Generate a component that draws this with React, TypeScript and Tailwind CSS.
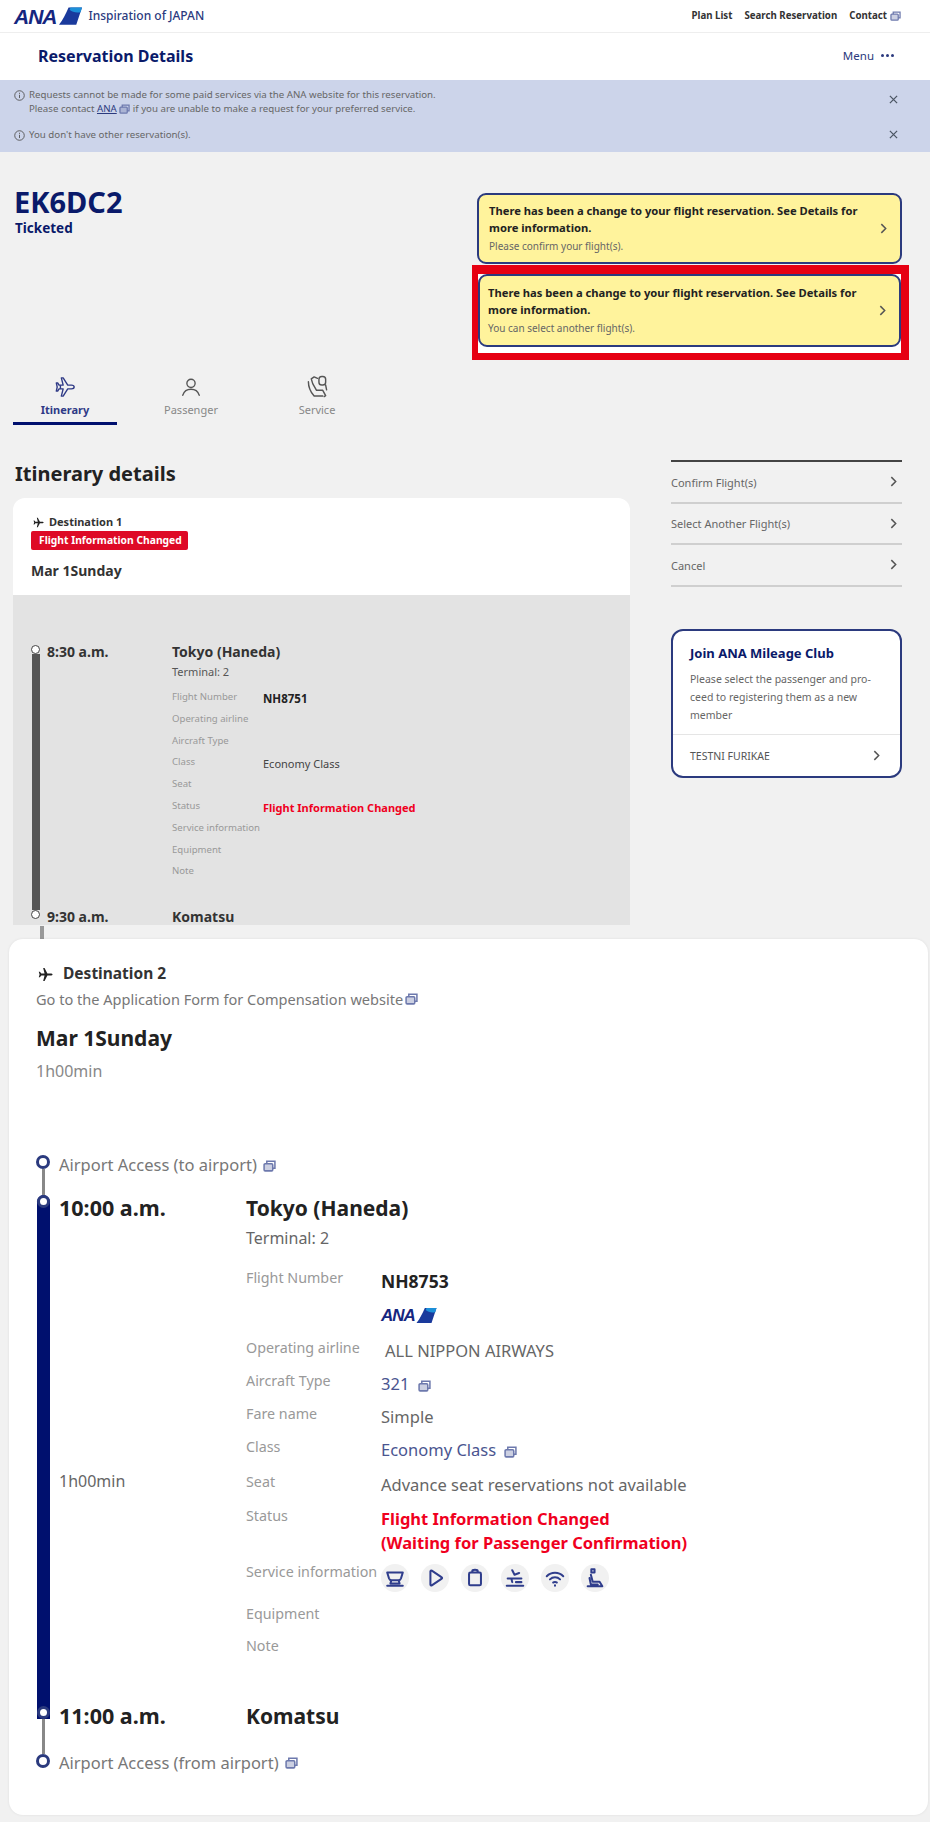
import React from 'react';

const NAVY = 'text-[#0a1a6a]';

function ExtIcon({ className = 'w-[11px] h-[10px] text-[#6d79ad]' }: { className?: string }) {
    return (
        <svg viewBox="0 0 12 11" className={`inline-block ${className}`} fill="none" stroke="currentColor" strokeWidth="1.4">
            <rect x="1" y="3.5" width="8" height="6.5" rx="1" fill="currentColor" fillOpacity="0.35" />
            <path d="M3.5 3.5V1.2h7.5v6.3H9" />
        </svg>
    );
}

function Chevron({ className = 'text-[#555]' }: { className?: string }) {
    return (
        <svg viewBox="0 0 8 12" className={`w-[7px] h-[11px] ${className}`} fill="none" stroke="currentColor" strokeWidth="1.7">
            <path d="M1.5 1l5 5-5 5" />
        </svg>
    );
}

function CloseX({ className = '' }: { className?: string }) {
    return (
        <svg viewBox="0 0 10 10" className={`w-[9px] h-[9px] text-[#4b5563] ${className}`} fill="none" stroke="currentColor" strokeWidth="1.4">
            <path d="M1 1l8 8M9 1L1 9" />
        </svg>
    );
}

function InfoIcon() {
    return (
        <svg viewBox="0 0 12 12" className="w-[11px] h-[11px] text-[#555] shrink-0" fill="none" stroke="currentColor" strokeWidth="1">
            <circle cx="6" cy="6" r="5.2" />
            <path d="M6 5.2v3.6M6 3v1.2" />
        </svg>
    );
}

function AnaLogo({ size }: { size: 'lg' | 'sm' }) {
    const big = size === 'lg';
    return (
        <span className="inline-flex items-center" aria-label="ANA">
            <span
                className={`font-['Liberation_Sans',sans-serif] font-bold italic text-[#15267f] tracking-[-1px] leading-none ${big ? 'text-[21px]' : 'text-[17px]'}`}
            >
                ANA
            </span>
            <svg viewBox="0 0 24 18" className={big ? 'w-[23px] h-[18px] ml-[2px]' : 'w-[21px] h-[15px] ml-[1px]'}>
                <path d="M10 0H24L18 18H0C4 13 7 7 10 0Z" fill="#1a3a9c" />
                <path d="M12 0H24L22.500 5C18 6 14 5 11 2.500Z" fill="#1c8fd8" />
            </svg>
        </span>
    );
}

function TopPlane() {
    return (
        <svg viewBox="0 0 16 16" className="w-[15px] h-[15px] text-[#222] shrink-0" fill="currentColor">
            <path d="M15.5 8c0-.7-1-1-2-1H10L7 1H5.5l1.5 6H3.5L2 5H.8l.9 3-.9 3H2l1.5-2H7l-1.5 6H7l3-6h3.5c1 0 2-.3 2-1z" />
        </svg>
    );
}

function TabPlane() {
    return (
        <svg viewBox="0 0 24 24" className="w-[22px] h-[22px] text-[#2f3a86]" fill="none" stroke="currentColor" strokeWidth="1.5" strokeLinejoin="round">
            <path d="M22 12c0-1-1.500-2-3-2h-4L10 2H8l2 8H5.500L4 7.500H2.500L3.500 12l-1 4.500H4L5.500 14H10l-2 8h2l5-8h4c1.500 0 3-1 3-2z" />
            <path d="M7 10v4" />
        </svg>
    );
}

function TabPerson() {
    return (
        <svg viewBox="0 0 24 24" className="w-[22px] h-[22px] text-[#555]" fill="none" stroke="currentColor" strokeWidth="1.5" strokeLinecap="round">
            <circle cx="12" cy="8" r="4.500" />
            <path d="M3 21c1.500-4.500 5-6.500 9-6.500s7.500 2 9 6.500" />
        </svg>
    );
}

function TabSeat() {
    return (
        <svg viewBox="0 0 24 24" className="w-[23px] h-[23px] text-[#555]" fill="none" stroke="currentColor" strokeWidth="1.500" strokeLinecap="round" strokeLinejoin="round">
            <rect x="13.500" y="1.500" width="7" height="9" rx="3" />
            <path d="M12 3.500L8.500 2 5.500 4l1.500 5 4 7h6.500l3 5.500-1.500 1" />
            <path d="M2.500 7c0 6 2.500 11 6 15h9" />
            <path d="M20.500 10.500l1 5" />
        </svg>
    );
}

const serviceIcons = [
    <path key="cup" d="M3.500 6h17l-2 6.500c-.5 1.500-1.500 2-3 2H8.500c-1.500 0-2.500-.5-3-2L3.500 6zM8 14.500L7 18h10l-1-3.500M3.500 20.500h17" />,
    <path key="play" d="M7 5c0-1 .8-1.400 1.500-1L19 11c1 .6 1 1.400 0 2L8.500 20c-.7.4-1.500 0-1.500-1V5z" />,
    <path key="bag" d="M9 6V4.500C9 3.500 10 3 12 3s3 .5 3 1.500V6M7 6h10c1 0 1.500.5 1.500 1.500v11c0 1-.5 1.500-1.500 1.500H7c-1 0-1.500-.5-1.500-1.500v-11C5.500 6.500 6 6 7 6z" />,
    <path key="seat" d="M9 3.500l2.500 5 5-2M4 12.500h15M8 12.500l1 4M3 20.500h18M13 16.500h6" />,
    <path key="wifi" d="M3 10c5-5 13-5 18 0M6.500 13.500c3-3 8-3 11 0M10 17c1-1 3-1 4 0M12 20v.5" />,
    <path key="person" d="M8 2.500h3.500V6H8zM7.500 8.500l2 7.500h7.500l3 5M6 12l1.500 7h7.500M4 21h16" />,
];

function Dot({ border }: { border: string }) {
    return <span className={`block rounded-full bg-white shrink-0 ${border}`} />;
}

type Row = { label: string; value?: React.ReactNode };

const firstRows: Row[] = [
    { label: 'Flight Number', value: <span className="font-bold text-[11.500px] text-[#222]">NH8751</span> },
    { label: 'Operating airline' },
    { label: 'Aircraft Type' },
    { label: 'Class', value: <span className="text-[#444]">Economy Class</span> },
    { label: 'Seat' },
    { label: 'Status', value: <span className="font-bold text-[#f0001e]">Flight Information Changed</span> },
    { label: 'Service information' },
    { label: 'Equipment' },
    { label: 'Note' },
];

function Notice({ sub, tall }: { sub: string; tall?: boolean }) {
    return (
        <div className={`flex items-center justify-between bg-[#fff39c] border-2 border-[#2b3a7e] rounded-[9px] pr-[13px] ${tall ? 'h-[73px] pl-[8px]' : 'h-[71px] pl-[10px]'}`}>
            <div className="w-[385px]">
                <p className="text-[11.200px] leading-[17px] font-bold text-[#222]">
                    There has been a change to your flight reservation. See Details for more information.
                </p>
                <p className="text-[10px] leading-[17px] mt-[2px] text-[#666]">{sub}</p>
            </div>
            <Chevron />
        </div>
    );
}

function Tab({ icon, label, active }: { icon: React.ReactNode; label: string; active?: boolean }) {
    return (
        <div className={`w-[104px] mr-[22px] flex flex-col items-center h-[54px] pt-[3px] ${active ? 'border-b-[3px] border-[#00106e]' : ''}`}>
            <div className="h-[25px] flex items-center">{icon}</div>
            <span className={`mt-[3px] text-[11px] leading-[15px] ${active ? 'font-bold text-[#2f3a86]' : 'text-[#888]'}`}>{label}</span>
        </div>
    );
}

function SideLink({ label }: { label: string }) {
    return (
        <div className="flex items-center justify-between h-[41.500px] border-b-2 border-[#cfcfcf] pr-[5px] text-[11px] text-[#666]">
            <span className="pt-[2px]">{label}</span>
            <Chevron />
        </div>
    );
}

function BigRow({ label, children, h }: { label: string; children?: React.ReactNode; h: string }) {
    return (
        <div className={`flex ${h}`}>
            <span className="w-[135px] text-[14.300px] leading-[20px] text-[#999] shrink-0 whitespace-nowrap">{label}</span>
            <div className="text-[16.500px] leading-[24px] pt-[1px]">{children}</div>
        </div>
    );
}

export default function App() {
    return (
        <div className="w-[930px] h-[1822px] overflow-hidden bg-[#f1f1f1] font-['Noto_Sans',sans-serif]">
            {/* global header */}
            <header className="h-[33px] bg-white border-b border-[#eee] flex items-center justify-between pl-[14px] pr-[29px]">
                <div className="flex items-center">
                    <AnaLogo size="lg" />
                    <span className="ml-[7px] text-[12px] text-[#2b3a7e] font-medium">Inspiration of JAPAN</span>
                </div>
                <nav className="flex items-center gap-[12px] text-[9.700px] font-bold text-[#333]">
                    <span>Plan List</span>
                    <span>Search Reservation</span>
                    <span className="flex items-center gap-[3px]">Contact <ExtIcon /></span>
                </nav>
            </header>
            <div className="h-[47px] bg-white flex items-center justify-between pl-[38px] pr-[36px] pb-[2px]">
                <h1 className={`text-[16px] font-bold ${NAVY}`}>Reservation Details</h1>
                <div className="flex items-center gap-[7px] text-[11.500px] text-[#2b3a7e]">
                    Menu
                    <span className="flex gap-[2px]">
                        <i className="w-[3px] h-[3px] rounded-full bg-[#2b3a7e]" />
                        <i className="w-[3px] h-[3px] rounded-full bg-[#2b3a7e]" />
                        <i className="w-[3px] h-[3px] rounded-full bg-[#2b3a7e]" />
                    </span>
                </div>
            </div>

            {/* notices */}
            <div className="h-[72px] bg-[#ccd4ea] pl-[14px] pr-[32px] pt-[8px] text-[9.700px] leading-[14px] text-[#666]">
                <div className="flex items-center justify-between h-[28px]">
                    <div className="flex gap-[4px]">
                        <span className="pt-[2px]"><InfoIcon /></span>
                        <p>
                            Requests cannot be made for some paid services via the ANA website for this reservation.
                            <br />
                            Please contact <u className="text-[#2b3a7e]">ANA</u> <ExtIcon /> if you are unable to make a request for your preferred service.
                        </p>
                    </div>
                    <CloseX className="-mt-[6px]" />
                </div>
                <div className="flex items-center justify-between mt-[12px] h-[14px]">
                    <div className="flex items-center gap-[4px]">
                        <InfoIcon />
                        <p>You don't have other reservation(s).</p>
                    </div>
                    <CloseX className="-mt-[1px]" />
                </div>
            </div>

            {/* reservation head */}
            <div className="flex justify-between pl-[14px] pr-[21px] pt-[26px]">
                <div className={NAVY}>
                    <div className="text-[29px] leading-[34px] mt-[7px] font-bold">EK6DC2</div>
                    <div className="text-[13.500px] leading-[18px] ml-[1px] font-bold">Ticketed</div>
                </div>
                <div className="w-[437px] pt-[15px]">
                    <div className="ml-[5px] mr-[7px]">
                        <Notice sub="Please confirm your flight(s)." />
                    </div>
                    <div className="mt-[1px] h-[95px] border-r-[8px] border-l-[6px] border-b-[7px] border-t-[9px] border-[#e60012] bg-white">
                        <Notice tall sub="You can select another flight(s)." />
                    </div>
                </div>
            </div>

            {/* tabs */}
            <div className="flex pl-[13px] mt-[11px]">
                <Tab active icon={<TabPlane />} label="Itinerary" />
                <Tab icon={<TabPerson />} label="Passenger" />
                <Tab icon={<TabSeat />} label="Service" />
            </div>

            <div className="flex mt-[34px]">
                {/* itinerary column */}
                <div className="w-[617px] ml-[13px] shrink-0">
                    <h2 className="ml-[2px] text-[20px] leading-[30px] font-bold text-[#222] h-[39px]">Itinerary details</h2>
                    <div className="rounded-t-[12px] overflow-hidden">
                        <div className="bg-white h-[97px] pl-[18px] pt-[15px]">
                            <div className="flex items-center gap-[5px] ml-[2px] h-[18px]">
                                <span className="[&>svg]:w-[11px] [&>svg]:h-[11px]"><TopPlane /></span>
                                <span className="text-[11px] font-bold text-[#333]">Destination 1</span>
                            </div>
                            <span className="inline-block align-top bg-[#de0a26] rounded-[2px] text-white text-[10.300px] leading-[19px] font-bold w-[157px] px-[8px] whitespace-nowrap">
                                Flight Information Changed
                            </span>
                            <div className="mt-[6px] text-[14px] leading-[20px] font-bold text-[#333]">Mar 1Sunday</div>
                        </div>
                        <div className="bg-[#e3e3e3] h-[330px] pl-[18px] pt-[47px] flex">
                            <div className="flex flex-col items-center w-[9px] h-[274px] mt-[3px]">
                                <Dot border="w-[9px] h-[9px] border-[1.500px] border-[#444]" />
                                <span className="w-[8px] flex-1 bg-[#555]" />
                                <Dot border="w-[9px] h-[9px] border-[1.500px] border-[#444]" />
                            </div>
                            <div className="ml-[7px] w-[125px] text-[14px] leading-[20px] font-bold text-[#333]">
                                8:30 a.m.
                                <div className="mt-[248px] leading-[14px]">9:30 a.m.</div>
                            </div>
                            <div>
                                <div className="text-[14px] leading-[20px] font-bold text-[#333]">Tokyo (Haneda)</div>
                                <div className="text-[11px] leading-[20px] text-[#555] mb-[7px]">Terminal: 2</div>
                                {firstRows.map((row) => (
                                    <div key={row.label} className="flex h-[21.800px]">
                                        <span className="w-[91px] text-[9.600px] leading-[15px] text-[#999] whitespace-nowrap">{row.label}</span>
                                        <span className="text-[11px] leading-[15px] pt-[2px]">{row.value}</span>
                                    </div>
                                ))}
                                <div className="mt-[25px] text-[14px] leading-[14px] font-bold text-[#333]">Komatsu</div>
                            </div>
                        </div>
                    </div>
                </div>

                {/* side column */}
                <div className="ml-[41px] w-[231px] mt-[1px] shrink-0">
                    <div className="border-t-2 border-[#444]" />
                    <SideLink label="Confirm Flight(s)" />
                    <SideLink label="Select Another Flight(s)" />
                    <SideLink label="Cancel" />
                    <div className="mt-[42px] h-[149px] bg-white border-2 border-[#2b3a7e] rounded-[12px]">
                        <div className="h-[104px] border-b border-[#e5e5e5] pl-[17px] pr-[16px] pt-[12px]">
                            <div className={`text-[13px] leading-[20px] font-bold ${NAVY}`}>Join ANA Mileage Club</div>
                            <p className="mt-[7px] text-[10.500px] leading-[18px] text-[#666]">
                                Please select the passenger and pro-
                                <br />
                                ceed to registering them as a new
                                <br />
                                member
                            </p>
                        </div>
                        <div className="flex items-center justify-between h-[41px] pl-[17px] pr-[20px] text-[10.500px] text-[#555]">
                            <span className="pt-[3px]">TESTNI FURIKAE</span>
                            <Chevron />
                        </div>
                    </div>
                </div>
            </div>

            <div className="ml-[40px] w-[4px] h-[13px] mt-[1px] bg-[#999]" />

            {/* destination 2 */}
            <section className="ml-[9px] w-[919px] h-[876px] bg-white rounded-[14px] shadow-[0_0_3px_rgba(0,0,0,0.08)] pt-[25px] pl-[27px]">
                <div className="flex items-center gap-[10px] ml-[2px] h-[20px]">
                    <TopPlane />
                    <span className="text-[15.500px] font-bold text-[#333]">Destination 2</span>
                </div>
                <div className="mt-[5px] text-[14.550px] leading-[20px] text-[#777] flex items-center gap-[2px]">
                    Go to the Application Form for Compensation website <ExtIcon className="w-[13px] h-[12px] text-[#6d79ad]" />
                </div>
                <div className="mt-[14px] text-[21px] leading-[30px] font-bold text-[#222]">Mar 1Sunday</div>
                <div className="mt-[6px] text-[16px] leading-[24px] text-[#888]">1h00min</div>

                <div className="mt-[72px] flex">
                    <div className="flex flex-col items-center w-[14px] h-[613px] shrink-0">
                        <Dot border="w-[14px] h-[14px] border-[3px] border-[#2b3a7e]" />
                        <span className="w-[3px] h-[26px] bg-[#888]" />
                        <span className="w-[13px] flex-1 bg-[#00106e] rounded-t-full flex flex-col items-center justify-between relative">
                            <Dot border="w-[13px] h-[13px] border-[3px] border-[#2b3a7e]" />
                            <Dot border="w-[13px] h-[13px] border-[3px] border-[#2b3a7e]" />
                        </span>
                        <span className="w-[3px] h-[35px] bg-[#888]" />
                        <Dot border="w-[14px] h-[14px] border-[3px] border-[#2b3a7e]" />
                    </div>

                    <div className="ml-[9px] w-[800px]">
                        <div className="h-[38px] text-[16.500px] leading-[20px] text-[#777] flex items-start gap-[6px]">
                            Airport Access (to airport) <ExtIcon className="w-[13px] h-[12px] text-[#6d79ad] mt-[5px]" />
                        </div>
                        <div className="flex">
                            <div className="w-[187px] shrink-0">
                                <div className="text-[21.500px] leading-[30px] font-bold text-[#222]">10:00 a.m.</div>
                                <div className="mt-[246px] text-[16px] leading-[24px] text-[#666]">1h00min</div>
                            </div>
                            <div>
                                <div className="text-[21px] leading-[30px] font-bold text-[#222]">Tokyo (Haneda)</div>
                                <div className="text-[16px] leading-[24px] text-[#666] mt-[3px] mb-[18px]">Terminal: 2</div>
                                <BigRow label="Flight Number" h="h-[32px]"><span className="font-bold text-[17.500px] text-[#222]">NH8753</span></BigRow>
                                <BigRow label="" h="h-[38px]"><span className="block pt-[2px]"><AnaLogo size="sm" /></span></BigRow>
                                <BigRow label="Operating airline" h="h-[33px]"><span className="ml-[4px] text-[#666]">ALL NIPPON AIRWAYS</span></BigRow>
                                <BigRow label="Aircraft Type" h="h-[33px]"><span className="text-[#4a5590]">321 <ExtIcon className="ml-[4px] w-[13px] h-[12px] text-[#6d79ad]" /></span></BigRow>
                                <BigRow label="Fare name" h="h-[33px]"><span className="text-[#666]">Simple</span></BigRow>
                                <BigRow label="Class" h="h-[35px]"><span className="text-[#4a5590]">Economy Class <ExtIcon className="ml-[4px] w-[13px] h-[12px] text-[#6d79ad]" /></span></BigRow>
                                <BigRow label="Seat" h="h-[34px]"><span className="text-[#666]">Advance seat reservations not available</span></BigRow>
                                <BigRow label="Status" h="h-[56px]">
                                    <span className="font-bold text-[#f0001e]">
                                        Flight Information Changed
                                        <br />
                                        (Waiting for Passenger Confirmation)
                                    </span>
                                </BigRow>
                                <BigRow label="Service information" h="h-[42px]">
                                    <div className="flex gap-[12px] mt-[1px]">
                                        {serviceIcons.map((icon, i) => (
                                            <span key={i} className="w-[28px] h-[28px] rounded-full bg-[#f1f1f1] flex items-center justify-center">
                                                <svg viewBox="0 0 24 24" className="w-[22px] h-[22px] text-[#2f3d8c]" fill="none" stroke="currentColor" strokeWidth="2.200" strokeLinejoin="round" strokeLinecap="round">
                                                    {icon}
                                                </svg>
                                            </span>
                                        ))}
                                    </div>
                                </BigRow>
                                <BigRow label="Equipment" h="h-[32px]" />
                                <BigRow label="Note" h="h-[20px]" />
                            </div>
                        </div>
                        <div className="flex mt-[45px] leading-[30px] font-bold text-[#222]">
                            <span className="w-[187px] text-[21.500px]">11:00 a.m.</span>
                            <span className="text-[21px]">Komatsu</span>
                        </div>
                        <div className="mt-[22px] text-[16.500px] leading-[20px] text-[#777] flex items-center gap-[6px]">
                            Airport Access (from airport) <ExtIcon className="w-[13px] h-[12px] text-[#6d79ad]" />
                        </div>
                    </div>
                </div>
            </section>
        </div>
    );
}
